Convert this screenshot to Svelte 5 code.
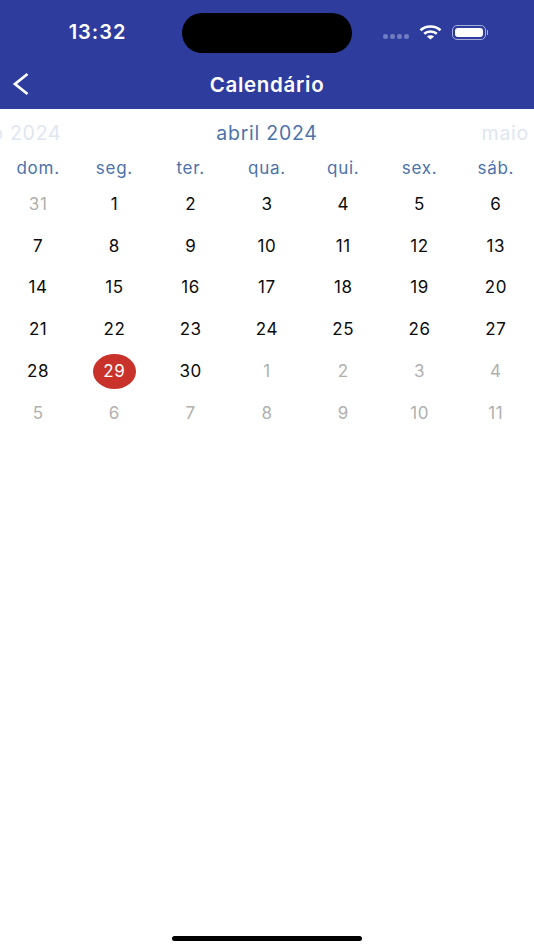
<script>
	const weekdays = ['dom.', 'seg.', 'ter.', 'qua.', 'qui.', 'sex.', 'sáb.'];

	let days = [{ n: 31, muted: true }];
	for (let i = 1; i <= 30; i++) days.push({ n: i, today: i === 29 });
	for (let i = 1; i <= 11; i++) days.push({ n: i, muted: true });
</script>

<div class="screen">
	<header>
		<div class="status">
			<span class="time">13:32</span>
			<div class="island"></div>
			<div class="indicators">
				<div class="dots"><i></i><i></i><i></i><i></i></div>
				<svg class="wifi" width="23" height="15" viewBox="0 0 23 15">
					<path d="M1.5 5.2C7 .2 16 .2 21.5 5.2" fill="none" stroke="#fff" stroke-width="2.6" />
					<path d="M5.2 8.8C8.6 5.8 14.4 5.8 17.8 8.8" fill="none" stroke="#fff" stroke-width="2.6" />
					<path d="M11.5 14.6L7.9 11.4C9.9 9.8 13.1 9.8 15.1 11.4Z" fill="#fff" />
				</svg>
				<div class="battery"><div class="level"></div></div>
				<div class="cap"></div>
			</div>
		</div>
		<div class="nav">
			<svg class="back" width="18" height="24" viewBox="0 0 18 24">
				<path d="M15.5 2L3 12L15.5 22" fill="none" stroke="#fff" stroke-width="2.8" />
			</svg>
			<h1>Calendário</h1>
		</div>
	</header>

	<div class="months">
		<span class="prev">março 2024</span>
		<span class="current">abril 2024</span>
		<span class="next">maio</span>
	</div>

	<div class="weekdays">
		{#each weekdays as w}
			<span>{w}</span>
		{/each}
	</div>

	<div class="days">
		{#each days as d}
			<div class="day" class:muted={d.muted}>
				<span class:today={d.today}>{d.n}</span>
			</div>
		{/each}
	</div>

	<div class="home"></div>
</div>

<style>
	:global(body) {
		margin: 0;
		background: #fff;
	}
	.screen {
		position: relative;
		width: 534px;
		height: 950px;
		overflow: hidden;
		font-family: Inter, "Liberation Sans", sans-serif;
	}
	header {
		height: 109px;
		background: #2e3c9e;
		color: #fff;
	}
	.status {
		display: flex;
		align-items: center;
		height: 40px;
		padding-top: 13px;
	}
	.time {
		width: 182px;
		padding-left: 13px;
		box-sizing: border-box;
		text-align: center;
		font-size: 20px;
		font-weight: 600;
		letter-spacing: 1px;
		margin-top: -2px;
	}
	.island {
		width: 170px;
		height: 40px;
		border-radius: 20px;
		background: #000;
	}
	.indicators {
		display: flex;
		align-items: center;
		margin-left: 31px;
		margin-top: -2px;
	}
	.dots {
		display: flex;
		gap: 2.5px;
		margin-top: 9px;
	}
	.dots i {
		width: 4.6px;
		height: 4.4px;
		border-radius: 50%;
		background: #6f7cc0;
	}
	.wifi {
		margin-left: 10px;
	}
	.battery {
		box-sizing: border-box;
		width: 34px;
		height: 15px;
		margin-left: 10px;
		padding: 2px;
		border: 1px solid #a5addb;
		border-radius: 5px;
	}
	.level {
		height: 100%;
		border-radius: 3px;
		background: #fff;
	}
	.cap {
		width: 1.5px;
		height: 5px;
		margin-left: 1px;
		background: #a5addb;
	}
	.nav {
		position: relative;
		height: 56px;
		display: flex;
		align-items: center;
		justify-content: center;
	}
	.back {
		position: absolute;
		left: 12px;
		top: 19px;
	}
	h1 {
		margin: 0;
		font-size: 20.5px;
		font-weight: 600;
		letter-spacing: 0.7px;
		padding-top: 7px;
	}
	.months {
		display: grid;
		grid-template-columns: minmax(0, 1fr) auto minmax(0, 1fr);
		align-items: center;
		height: 48px;
		overflow: hidden;
		font-size: 19.5px;
		letter-spacing: 0.75px;
		white-space: nowrap;
	}
	.prev {
		justify-self: end;
		margin-right: 155px;
		color: #dfe6f1;
	}
	.current {
		color: #4d73aa;
	}
	.next {
		justify-self: end;
		margin-right: 5px;
		color: #dfe6f1;
	}
	.weekdays,
	.days {
		display: grid;
		grid-template-columns: repeat(7, 1fr);
		text-align: center;
	}
	.weekdays {
		height: 26px;
		margin-bottom: -2px;
		font-size: 17px;
		letter-spacing: 0.75px;
		color: #4d73aa;
		line-height: 22px;
	}
	.days {
		grid-auto-rows: 41.8px;
		margin-top: 2px;
		font-size: 17px;
		letter-spacing: 0.6px;
		color: #0c0c0c;
	}
	.day {
		display: flex;
		align-items: center;
		justify-content: center;
	}
	.day.muted {
		color: #b0b0b0;
	}
	.today {
		display: flex;
		align-items: center;
		justify-content: center;
		width: 43px;
		height: 35px;
		border-radius: 50%;
		background: #c8322b;
		color: #fff;
	}
	.home {
		position: absolute;
		left: 172px;
		bottom: 9px;
		width: 190px;
		height: 5px;
		border-radius: 3px;
		background: #000;
	}
</style>
